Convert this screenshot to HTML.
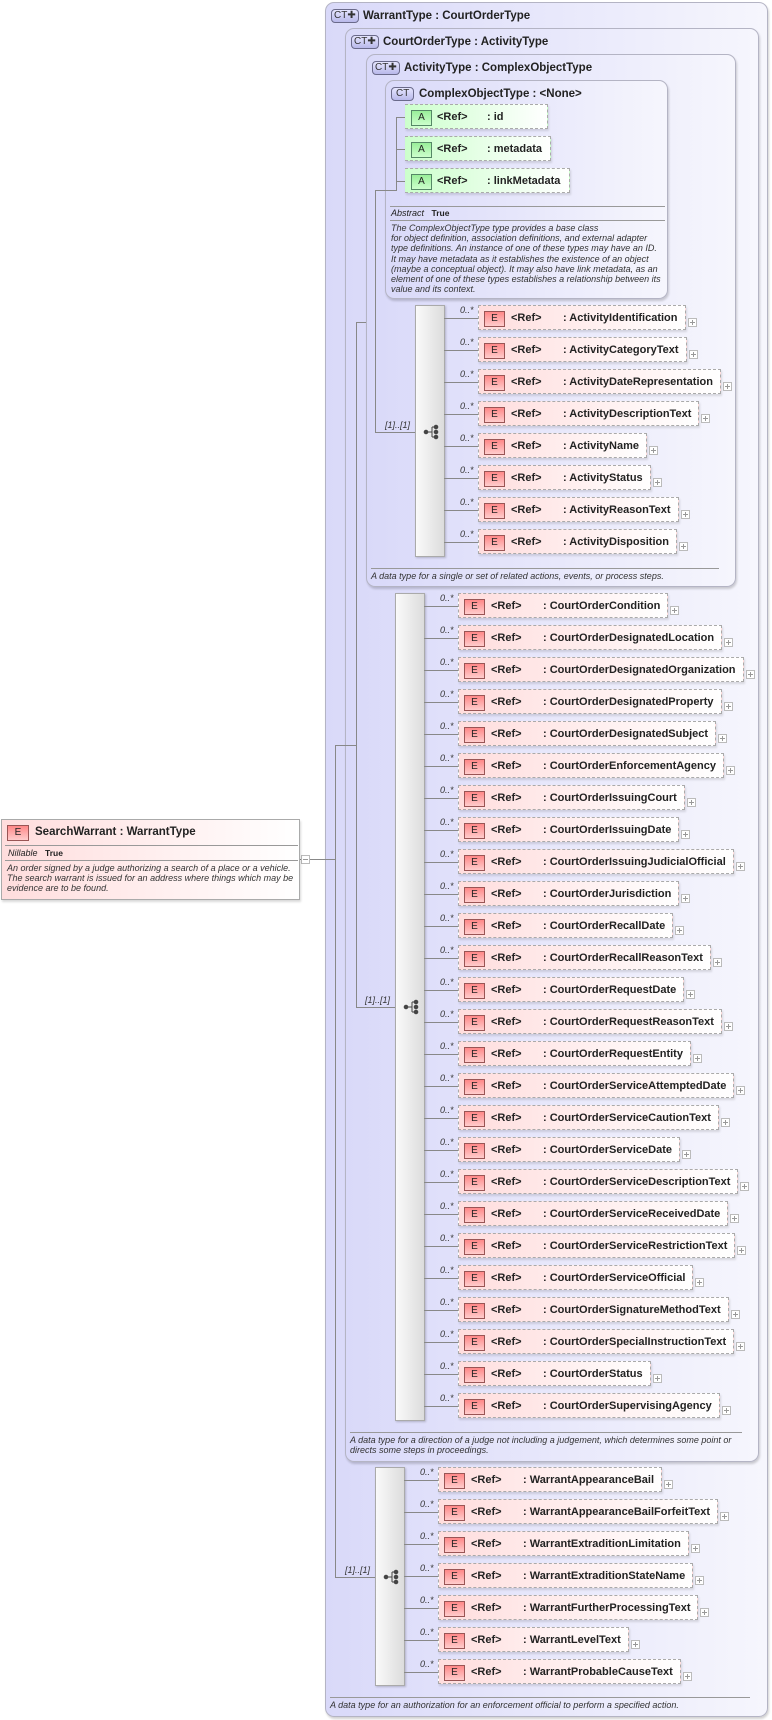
<!DOCTYPE html>
<html><head><meta charset="utf-8"><style>
*{box-sizing:border-box;margin:0;padding:0}
body{width:772px;height:1720px;background:#fff;position:relative;overflow:hidden;font-family:"Liberation Sans",Arial,sans-serif;color:#222}
.a{position:absolute}
.box{position:absolute;border:1px solid #b4b4c4;border-radius:9px;background:linear-gradient(to right,#d9d9f9,#f6f6fd);box-shadow:1px 2px 2px rgba(0,0,0,.18)}
.ct{position:absolute;left:5px;top:6px;height:14px;padding:0 2px;border:1px solid #6a6a8a;border-radius:4px;background:linear-gradient(#e6e6ff,#b8b8ea);font-size:10px;line-height:12px;color:#333}
.tt{position:absolute;left:37px;top:5px;font-size:11.5px;font-weight:bold;white-space:nowrap;line-height:16px}
.hl{position:absolute;height:1px;background:#999}
.ln{position:absolute;background:#888}
.d{position:absolute;font-size:9px;font-style:italic;line-height:10.2px;color:#333;white-space:nowrap}
.bar{position:absolute;border:1px solid #aaa;background:linear-gradient(to right,#fafafa,#dcdcdc);box-shadow:1px 1px 2px rgba(0,0,0,.2)}
.sq{position:absolute;width:16px;height:16px}
.m{position:absolute;font-size:9px;font-style:italic;color:#333;white-space:nowrap}
.el{position:absolute;height:25px;border:1px dashed #aaa;background:linear-gradient(to right,#fdd,#fff);white-space:nowrap;font-size:11px;font-weight:bold;line-height:25px;padding-left:84px;padding-right:7px;box-shadow:1px 2px 2px rgba(0,0,0,.12)}
.el .e{position:absolute;left:5px;top:5px;width:21px;height:16px;border:1px solid #955;background:linear-gradient(#f88,#fcc);font-size:10px;font-weight:normal;line-height:14px;text-align:center;color:#222}
.el .r{position:absolute;left:32px;top:0}
.el::before{content:"";position:absolute;left:-35px;top:12px;width:34px;height:1px;background:#888}
.el .m{left:-19px;top:-1px;font-weight:normal;line-height:10px}
.el .p{position:absolute;right:-12px;top:12px;width:9px;height:9px;border:1px solid #bbb;background:#fff}
.el .p::after{content:"";position:absolute;left:1px;top:3px;width:5px;height:1px;background:#999}
.el .p::before{content:"";position:absolute;left:3px;top:1px;width:1px;height:5px;background:#999}
.at{position:absolute;height:25px;border:1px dashed #aaa;border-left:none;background:linear-gradient(to right,#cfc,#fff);white-space:nowrap;font-size:11px;font-weight:bold;line-height:25px;padding-left:82px;padding-right:6px;box-shadow:1px 2px 2px rgba(0,0,0,.12)}
.at .b{position:absolute;left:6px;top:5px;width:21px;height:16px;border:1px solid #586;background:linear-gradient(#9e9,#cfc);font-size:10px;font-weight:normal;line-height:14px;text-align:center}
.at .r{position:absolute;left:32px}
</style></head><body>

<div class="box" style="left:325px;top:2px;width:443px;height:1715px">
<div class="ct">CT&#10010;</div><div class="tt">WarrantType : CourtOrderType</div>
<div class="hl" style="left:4px;top:1694px;width:420px"></div>
<div class="d" style="left:4px;top:1697px">A data type for an authorization for an enforcement official to perform a specified action.</div>
</div>
<div class="ln" style="left:300px;top:859px;width:35px;height:1px"></div>
<div class="a" style="left:301px;top:855px;width:9px;height:9px;border:1px solid #bbb;background:#fff"><div class="a" style="left:1px;top:3px;width:5px;height:1px;background:#999"></div></div>
<div class="ln" style="left:335px;top:745px;width:1px;height:833px"></div>
<div class="ln" style="left:335px;top:1577px;width:40px;height:1px"></div>

<div class="box" style="left:345px;top:28px;width:414px;height:1434px">
<div class="ct">CT&#10010;</div><div class="tt">CourtOrderType : ActivityType</div>
<div class="hl" style="left:4px;top:1403px;width:392px"></div>
<div class="d" style="left:4px;top:1406px">A data type for a direction of a judge not including a judgement, which determines some point or<br>directs some steps in proceedings.</div>
</div>
<div class="ln" style="left:356px;top:322px;width:1px;height:686px"></div>
<div class="ln" style="left:356px;top:1007px;width:39px;height:1px"></div>
<div class="ln" style="left:356px;top:322px;width:19px;height:1px"></div>
<div class="ln" style="left:335px;top:745px;width:21px;height:1px"></div>

<div class="box" style="left:366px;top:54px;width:370px;height:533px">
<div class="ct">CT&#10010;</div><div class="tt">ActivityType : ComplexObjectType</div>
<div class="hl" style="left:4px;top:513px;width:348px"></div>
<div class="d" style="left:4px;top:516px">A data type for a single or set of related actions, events, or process steps.</div>
</div>
<div class="ln" style="left:375px;top:190px;width:1px;height:242px"></div>
<div class="ln" style="left:375px;top:432px;width:40px;height:1px"></div>

<div class="box" style="left:385px;top:80px;width:283px;height:219px">
<div class="ct" style="padding:0 4px">CT</div><div class="tt" style="left:33px">ComplexObjectType : &lt;None&gt;</div>
<div class="hl" style="left:4px;top:125px;width:275px"></div>
<div class="a" style="left:5px;top:127px;font-size:9px;white-space:nowrap"><i>Abstract</i>&nbsp;&nbsp;&nbsp;<b style="font-size:8.5px">True</b></div>
<div class="hl" style="left:4px;top:139px;width:275px"></div>
<div class="d" style="left:5px;top:142px">The ComplexObjectType type provides a base class<br>for object definition, association definitions, and external adapter<br>type definitions. An instance of one of these types may have an ID.<br>It may have metadata as it establishes the existence of an object<br>(maybe a conceptual object). It may also have link metadata, as an<br>element of one of these types establishes a relationship between its<br>value and its context.</div>
</div>
<div class="ln" style="left:375px;top:190px;width:21px;height:1px"></div>
<div class="ln" style="left:396px;top:117px;width:1px;height:74px"></div>
<div class="ln" style="left:396px;top:117px;width:9px;height:1px"></div>
<div class="ln" style="left:396px;top:149px;width:9px;height:1px"></div>
<div class="ln" style="left:396px;top:181px;width:9px;height:1px"></div>
<div class="at" style="left:405px;top:104px;width:143px"><span class="b">A</span><span class="r">&lt;Ref&gt;</span>: id</div>
<div class="at" style="left:405px;top:136px;width:146px"><span class="b">A</span><span class="r">&lt;Ref&gt;</span>: metadata</div>
<div class="at" style="left:405px;top:168px;width:165px"><span class="b">A</span><span class="r">&lt;Ref&gt;</span>: linkMetadata</div>

<div class="bar" style="left:415px;top:305px;width:30px;height:252px"></div>
<div class="m" style="left:385px;top:420px">[1]..[1]</div>
<svg class="sq" style="left:423px;top:424px" viewBox="0 0 16 16"><g fill="#444" stroke="#444"><circle cx="3" cy="8" r="1.8"/><circle cx="13" cy="3" r="1.8"/><circle cx="13" cy="8" r="1.8"/><circle cx="13" cy="13" r="1.8"/><path d="M3 8H9M9 3V13M9 3H13M9 13H13" fill="none"/></g></svg>

<div class="bar" style="left:395px;top:593px;width:30px;height:828px"></div>
<div class="m" style="left:365px;top:995px">[1]..[1]</div>
<svg class="sq" style="left:403px;top:999px" viewBox="0 0 16 16"><g fill="#444" stroke="#444"><circle cx="3" cy="8" r="1.8"/><circle cx="13" cy="3" r="1.8"/><circle cx="13" cy="8" r="1.8"/><circle cx="13" cy="13" r="1.8"/><path d="M3 8H9M9 3V13M9 3H13M9 13H13" fill="none"/></g></svg>

<div class="bar" style="left:375px;top:1467px;width:30px;height:219px"></div>
<div class="m" style="left:345px;top:1565px">[1]..[1]</div>
<svg class="sq" style="left:383px;top:1569px" viewBox="0 0 16 16"><g fill="#444" stroke="#444"><circle cx="3" cy="8" r="1.8"/><circle cx="13" cy="3" r="1.8"/><circle cx="13" cy="8" r="1.8"/><circle cx="13" cy="13" r="1.8"/><path d="M3 8H9M9 3V13M9 3H13M9 13H13" fill="none"/></g></svg>

<div class="el" style="left:478px;top:305px"><span class="m">0..*</span><span class="e">E</span><span class="r">&lt;Ref&gt;</span>: ActivityIdentification<span class="p"></span></div>
<div class="el" style="left:478px;top:337px"><span class="m">0..*</span><span class="e">E</span><span class="r">&lt;Ref&gt;</span>: ActivityCategoryText<span class="p"></span></div>
<div class="el" style="left:478px;top:369px"><span class="m">0..*</span><span class="e">E</span><span class="r">&lt;Ref&gt;</span>: ActivityDateRepresentation<span class="p"></span></div>
<div class="el" style="left:478px;top:401px"><span class="m">0..*</span><span class="e">E</span><span class="r">&lt;Ref&gt;</span>: ActivityDescriptionText<span class="p"></span></div>
<div class="el" style="left:478px;top:433px"><span class="m">0..*</span><span class="e">E</span><span class="r">&lt;Ref&gt;</span>: ActivityName<span class="p"></span></div>
<div class="el" style="left:478px;top:465px"><span class="m">0..*</span><span class="e">E</span><span class="r">&lt;Ref&gt;</span>: ActivityStatus<span class="p"></span></div>
<div class="el" style="left:478px;top:497px"><span class="m">0..*</span><span class="e">E</span><span class="r">&lt;Ref&gt;</span>: ActivityReasonText<span class="p"></span></div>
<div class="el" style="left:478px;top:529px"><span class="m">0..*</span><span class="e">E</span><span class="r">&lt;Ref&gt;</span>: ActivityDisposition<span class="p"></span></div>

<div class="el" style="left:458px;top:593px"><span class="m">0..*</span><span class="e">E</span><span class="r">&lt;Ref&gt;</span>: CourtOrderCondition<span class="p"></span></div>
<div class="el" style="left:458px;top:625px"><span class="m">0..*</span><span class="e">E</span><span class="r">&lt;Ref&gt;</span>: CourtOrderDesignatedLocation<span class="p"></span></div>
<div class="el" style="left:458px;top:657px"><span class="m">0..*</span><span class="e">E</span><span class="r">&lt;Ref&gt;</span>: CourtOrderDesignatedOrganization<span class="p"></span></div>
<div class="el" style="left:458px;top:689px"><span class="m">0..*</span><span class="e">E</span><span class="r">&lt;Ref&gt;</span>: CourtOrderDesignatedProperty<span class="p"></span></div>
<div class="el" style="left:458px;top:721px"><span class="m">0..*</span><span class="e">E</span><span class="r">&lt;Ref&gt;</span>: CourtOrderDesignatedSubject<span class="p"></span></div>
<div class="el" style="left:458px;top:753px"><span class="m">0..*</span><span class="e">E</span><span class="r">&lt;Ref&gt;</span>: CourtOrderEnforcementAgency<span class="p"></span></div>
<div class="el" style="left:458px;top:785px"><span class="m">0..*</span><span class="e">E</span><span class="r">&lt;Ref&gt;</span>: CourtOrderIssuingCourt<span class="p"></span></div>
<div class="el" style="left:458px;top:817px"><span class="m">0..*</span><span class="e">E</span><span class="r">&lt;Ref&gt;</span>: CourtOrderIssuingDate<span class="p"></span></div>
<div class="el" style="left:458px;top:849px"><span class="m">0..*</span><span class="e">E</span><span class="r">&lt;Ref&gt;</span>: CourtOrderIssuingJudicialOfficial<span class="p"></span></div>
<div class="el" style="left:458px;top:881px"><span class="m">0..*</span><span class="e">E</span><span class="r">&lt;Ref&gt;</span>: CourtOrderJurisdiction<span class="p"></span></div>
<div class="el" style="left:458px;top:913px"><span class="m">0..*</span><span class="e">E</span><span class="r">&lt;Ref&gt;</span>: CourtOrderRecallDate<span class="p"></span></div>
<div class="el" style="left:458px;top:945px"><span class="m">0..*</span><span class="e">E</span><span class="r">&lt;Ref&gt;</span>: CourtOrderRecallReasonText<span class="p"></span></div>
<div class="el" style="left:458px;top:977px"><span class="m">0..*</span><span class="e">E</span><span class="r">&lt;Ref&gt;</span>: CourtOrderRequestDate<span class="p"></span></div>
<div class="el" style="left:458px;top:1009px"><span class="m">0..*</span><span class="e">E</span><span class="r">&lt;Ref&gt;</span>: CourtOrderRequestReasonText<span class="p"></span></div>
<div class="el" style="left:458px;top:1041px"><span class="m">0..*</span><span class="e">E</span><span class="r">&lt;Ref&gt;</span>: CourtOrderRequestEntity<span class="p"></span></div>
<div class="el" style="left:458px;top:1073px"><span class="m">0..*</span><span class="e">E</span><span class="r">&lt;Ref&gt;</span>: CourtOrderServiceAttemptedDate<span class="p"></span></div>
<div class="el" style="left:458px;top:1105px"><span class="m">0..*</span><span class="e">E</span><span class="r">&lt;Ref&gt;</span>: CourtOrderServiceCautionText<span class="p"></span></div>
<div class="el" style="left:458px;top:1137px"><span class="m">0..*</span><span class="e">E</span><span class="r">&lt;Ref&gt;</span>: CourtOrderServiceDate<span class="p"></span></div>
<div class="el" style="left:458px;top:1169px"><span class="m">0..*</span><span class="e">E</span><span class="r">&lt;Ref&gt;</span>: CourtOrderServiceDescriptionText<span class="p"></span></div>
<div class="el" style="left:458px;top:1201px"><span class="m">0..*</span><span class="e">E</span><span class="r">&lt;Ref&gt;</span>: CourtOrderServiceReceivedDate<span class="p"></span></div>
<div class="el" style="left:458px;top:1233px"><span class="m">0..*</span><span class="e">E</span><span class="r">&lt;Ref&gt;</span>: CourtOrderServiceRestrictionText<span class="p"></span></div>
<div class="el" style="left:458px;top:1265px"><span class="m">0..*</span><span class="e">E</span><span class="r">&lt;Ref&gt;</span>: CourtOrderServiceOfficial<span class="p"></span></div>
<div class="el" style="left:458px;top:1297px"><span class="m">0..*</span><span class="e">E</span><span class="r">&lt;Ref&gt;</span>: CourtOrderSignatureMethodText<span class="p"></span></div>
<div class="el" style="left:458px;top:1329px"><span class="m">0..*</span><span class="e">E</span><span class="r">&lt;Ref&gt;</span>: CourtOrderSpecialInstructionText<span class="p"></span></div>
<div class="el" style="left:458px;top:1361px"><span class="m">0..*</span><span class="e">E</span><span class="r">&lt;Ref&gt;</span>: CourtOrderStatus<span class="p"></span></div>
<div class="el" style="left:458px;top:1393px"><span class="m">0..*</span><span class="e">E</span><span class="r">&lt;Ref&gt;</span>: CourtOrderSupervisingAgency<span class="p"></span></div>

<div class="el" style="left:438px;top:1467px"><span class="m">0..*</span><span class="e">E</span><span class="r">&lt;Ref&gt;</span>: WarrantAppearanceBail<span class="p"></span></div>
<div class="el" style="left:438px;top:1499px"><span class="m">0..*</span><span class="e">E</span><span class="r">&lt;Ref&gt;</span>: WarrantAppearanceBailForfeitText<span class="p"></span></div>
<div class="el" style="left:438px;top:1531px"><span class="m">0..*</span><span class="e">E</span><span class="r">&lt;Ref&gt;</span>: WarrantExtraditionLimitation<span class="p"></span></div>
<div class="el" style="left:438px;top:1563px"><span class="m">0..*</span><span class="e">E</span><span class="r">&lt;Ref&gt;</span>: WarrantExtraditionStateName<span class="p"></span></div>
<div class="el" style="left:438px;top:1595px"><span class="m">0..*</span><span class="e">E</span><span class="r">&lt;Ref&gt;</span>: WarrantFurtherProcessingText<span class="p"></span></div>
<div class="el" style="left:438px;top:1627px"><span class="m">0..*</span><span class="e">E</span><span class="r">&lt;Ref&gt;</span>: WarrantLevelText<span class="p"></span></div>
<div class="el" style="left:438px;top:1659px"><span class="m">0..*</span><span class="e">E</span><span class="r">&lt;Ref&gt;</span>: WarrantProbableCauseText<span class="p"></span></div>

<div class="a" style="left:1px;top:819px;width:299px;height:81px;border:1px solid #aaa;background:linear-gradient(to right,#fdd,#fff);box-shadow:1px 2px 2px rgba(0,0,0,.15)">
<div class="a" style="left:5px;top:5px;width:22px;height:16px;border:1px solid #955;background:linear-gradient(#f88,#fcc);font-size:10px;line-height:14px;text-align:center">E</div>
<div class="a" style="left:33px;top:5px;font-size:11.5px;font-weight:bold;line-height:15px;white-space:nowrap">SearchWarrant : WarrantType</div>
<div class="hl" style="left:3px;top:25px;width:293px"></div>
<div class="a" style="left:6px;top:27px;font-size:9px;white-space:nowrap;line-height:12px"><i>Nillable</i>&nbsp;&nbsp;&nbsp;<b style="font-size:8.5px">True</b></div>
<div class="hl" style="left:3px;top:40px;width:293px"></div>
<div class="d" style="left:5px;top:43px">An order signed by a judge authorizing a search of a place or a vehicle.<br>The search warrant is issued for an address where things which may be<br>evidence are to be found.</div>
</div>
</body></html>
